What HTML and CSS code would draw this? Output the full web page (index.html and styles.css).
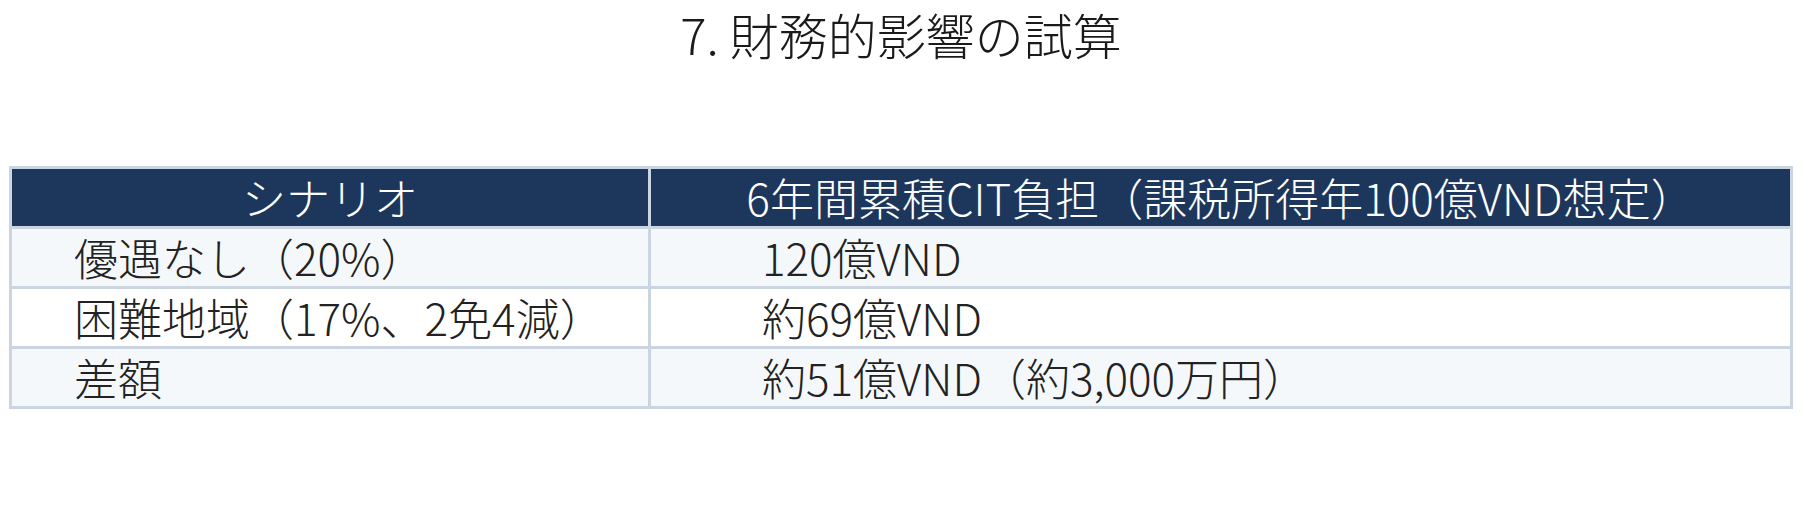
FILE: index.html
```html
<!DOCTYPE html>
<html lang="ja">
<head>
<meta charset="utf-8">
<title>7. 財務的影響の試算</title>
<link rel="stylesheet" href="styles.css">
</head>
<body>
<main class="slide">
  <h1 class="title">7. 財務的影響の試算</h1>
  <div class="table-wrap">
    <table class="impact">
      <thead>
        <tr>
          <th class="col-scenario">シナリオ</th>
          <th class="col-burden">6年間累積CIT負担（課税所得年100億VND想定）</th>
        </tr>
      </thead>
      <tbody>
        <tr class="alt">
          <td class="cell-scenario">優遇なし（20%）</td>
          <td class="cell-burden">120億VND</td>
        </tr>
        <tr>
          <td class="cell-scenario">困難地域（17%、2免4減）</td>
          <td class="cell-burden">約69億VND</td>
        </tr>
        <tr class="alt">
          <td class="cell-scenario">差額</td>
          <td class="cell-burden">約51億VND（約3,000万円）</td>
        </tr>
      </tbody>
    </table>
  </div>
</main>
</body>
</html>
```

FILE: styles.css
```css
html, body {
  margin: 0;
  padding: 0;
  background: #ffffff;
}

body {
  font-family: "Noto Sans CJK JP", "Noto Sans", sans-serif;
  font-weight: 300;
  color: #222222;
}

.slide {
  display: flex;
  flex-direction: column;
}

.title {
  margin: 0;
  padding-top: 5px;
  font-size: 49px;
  line-height: 58px;
  font-weight: 300;
  text-align: center;
  color: #1a1a1a;
}

.table-wrap {
  margin-top: 103px;
  padding: 0 9px;
}

.impact {
  width: 100%;
  table-layout: fixed;
  border-collapse: separate;
  border-spacing: 0;
  font-size: 44px;
  line-height: 57px;
}

.impact th,
.impact td {
  padding: 0;
  border-right: 3px solid #cbd5e1;
  border-bottom: 3px solid #cbd5e1;
  white-space: nowrap;
  box-sizing: border-box;
}

.impact th {
  background: #1d375c;
  color: #ffffff;
  font-weight: 300;
  text-align: center;
  border-top: 3px solid #cbd5e1;
}

.impact .col-scenario,
.impact .cell-scenario {
  border-left: 3px solid #cbd5e1;
}

.impact .col-scenario {
  width: 642px;
}

.impact td {
  background: #ffffff;
  color: #222222;
  text-align: left;
}

.impact tr.alt td {
  background: #f5f8fb;
}

.impact .cell-scenario {
  padding-left: 62px;
}

.impact .cell-burden {
  padding-left: 111px;
}
```
